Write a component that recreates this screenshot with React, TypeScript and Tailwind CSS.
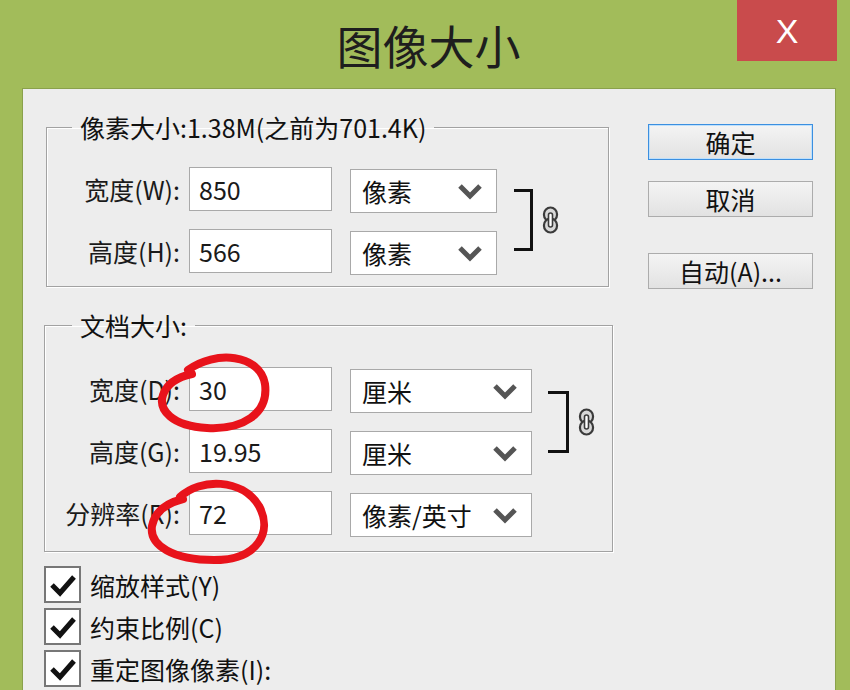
const font = "font-['Noto_Sans_CJK_SC',sans-serif]"

const Chevron = () => (
  <svg width="24" height="17" viewBox="0 0 24 17">
    <polyline points="2,3 12,13 22,3" fill="none" stroke="#555" strokeWidth="5" />
  </svg>
)

const Chain = () => (
  <svg width="17" height="28" viewBox="0 0 17 28">
    <rect x="2" y="1.5" width="13" height="14" rx="6.5" fill="#d8d8d8" stroke="#3a3a3a" strokeWidth="2.2" />
    <rect x="2" y="12.5" width="13" height="14" rx="6.5" fill="#d8d8d8" stroke="#3a3a3a" strokeWidth="2.2" />
    <rect x="6.5" y="7" width="4" height="14" rx="2" fill="#fff" stroke="#3a3a3a" strokeWidth="1.6" />
  </svg>
)

const Field = ({ label, value, unit, selectW }: { label: string; value: string; unit: string; selectW: string }) => (
  <div className="flex items-start h-[44px]">
    <div className="w-[134px] h-[44px] flex items-center justify-end text-[25px] leading-[30px] text-[#1a1a1a]">{label}</div>
    <div className="ml-[9px] w-[143px] h-[44px] bg-white border border-[#a9a9a9] flex items-center pl-[9px] text-[25px] leading-[30px] text-[#1a1a1a]">
      {value}
    </div>
    <div className={`ml-[18px] mt-[2px] ${selectW} h-[44px] bg-white border border-[#a9a9a9] flex items-center justify-between pl-[11px] pr-[14px] text-[25px] leading-[30px] text-[#111]`}>
      <span>{unit}</span>
      <Chevron />
    </div>
  </div>
)

const Link = ({ w }: { w: string }) => (
  <div className="flex items-center">
    <div className={`${w} h-[62px] border-t-[3px] border-r-[3px] border-b-[3px] border-[#111]`} />
    <div className="ml-[9px]">
      <Chain />
    </div>
  </div>
)

const Check = ({ label }: { label: string }) => (
  <div className="flex items-center">
    <div className="w-[37px] h-[37px] bg-white border-2 border-[#777] flex items-center justify-center">
      <svg width="28" height="26" viewBox="0 0 28 26">
        <path d="M3 13 L11 21 L25 5" fill="none" stroke="#111" strokeWidth="5" />
      </svg>
    </div>
    <span className="ml-[9px] text-[25px] leading-[30px] text-[#111]">{label}</span>
  </div>
)

const Btn = ({ label, primary }: { label: string; primary?: boolean }) => (
  <div
    className={`w-[165px] h-[36px] flex items-center justify-center text-[25px] leading-[30px] text-[#111] bg-gradient-to-b from-[#f4f4f4] to-[#e2e2e2] border ${
      primary ? 'border-[#3b8fe0] shadow-[inset_0_0_0_1px_#bfe0fb]' : 'border-[#acacac]'
    }`}
  >
    {label}
  </div>
)

export default function App() {
  return (
    <div className={`relative w-[850px] h-[690px] overflow-hidden bg-[#a2bc5a] flex flex-col ${font}`}>
      <div className="shrink-0 h-[88px] pl-[22px] pr-[15px] flex items-center justify-center">
        <h1 className="text-[46px] leading-[56px] text-[#1e1e1e] font-normal">图像大小</h1>
      </div>
      <div className="absolute right-[13px] top-0 w-[100px] h-[61px] bg-[#c94b4c] flex items-center justify-center">
        <span className="text-white text-[34px] leading-none font-['Liberation_Sans',sans-serif]">X</span>
      </div>

      <div className="flex-1 min-h-0 ml-[22px] w-[814px] bg-[#ededed] border-t border-l border-r border-[#8aa14c] flex">
        <div className="ml-[21px] w-[570px] shrink-0 flex flex-col">
          <fieldset className="mt-[24px] ml-[2px] w-[563px] border border-[#a2a2a2] shadow-[inset_1px_1px_0_#fff,1px_1px_0_#fff] pt-[26px] pb-[13px]">
            <legend className="ml-[25px] px-[8px] text-[25px] leading-[28px] text-[#111]">像素大小:1.38M(之前为701.4K)</legend>
            <div className="flex items-start">
              <div className="flex flex-col gap-[18px] -ml-[1px]">
                <Field label="宽度(W):" value="850" unit="像素" selectW="w-[147px]" />
                <Field label="高度(H):" value="566" unit="像素" selectW="w-[147px]" />
              </div>
              <div className="ml-[17px] mt-[22px]">
                <Link w="w-[19px]" />
              </div>
            </div>
          </fieldset>

          <fieldset className="mt-[24px] w-[569px] border border-[#a2a2a2] shadow-[inset_1px_1px_0_#fff,1px_1px_0_#fff] pt-[28px] pb-[16px]">
            <legend className="ml-[27px] px-[8px] text-[25px] leading-[28px] text-[#111]">文档大小:</legend>
            <div className="flex items-start">
              <div className="flex flex-col gap-[18px] ml-[1px]">
                <Field label="宽度(D):" value="30" unit="厘米" selectW="w-[182px]" />
                <Field label="高度(G):" value="19.95" unit="厘米" selectW="w-[182px]" />
                <Field label="分辨率(R):" value="72" unit="像素/英寸" selectW="w-[182px]" />
              </div>
              <div className="ml-[16px] mt-[24px]">
                <Link w="w-[21px]" />
              </div>
            </div>
          </fieldset>

          <div className="mt-[14px] flex flex-col gap-[5px]">
            <Check label="缩放样式(Y)" />
            <Check label="约束比例(C)" />
            <Check label="重定图像像素(I):" />
          </div>
        </div>

        <div className="ml-[34px] mt-[35px] flex flex-col">
          <Btn label="确定" primary />
          <div className="mt-[21px]">
            <Btn label="取消" />
          </div>
          <div className="mt-[36px]">
            <Btn label="自动(A)..." />
          </div>
        </div>
      </div>

      <svg className="absolute inset-0 pointer-events-none" width="850" height="690" viewBox="0 0 850 690">
        <path
          d="M188 370 C215 350 260 354 265 384 C269 414 242 430 207 428 C172 426 158 410 163 395 C167 383 178 377 192 374"
          fill="none"
          stroke="#e8131b"
          strokeWidth="8"
          strokeLinecap="round"
        />
        <path
          d="M180 497 C200 478 242 478 259 506 C273 532 258 560 214 560 C174 560 149 546 152 526 C155 511 167 503 183 499"
          fill="none"
          stroke="#e8131b"
          strokeWidth="8"
          strokeLinecap="round"
        />
      </svg>
    </div>
  )
}
